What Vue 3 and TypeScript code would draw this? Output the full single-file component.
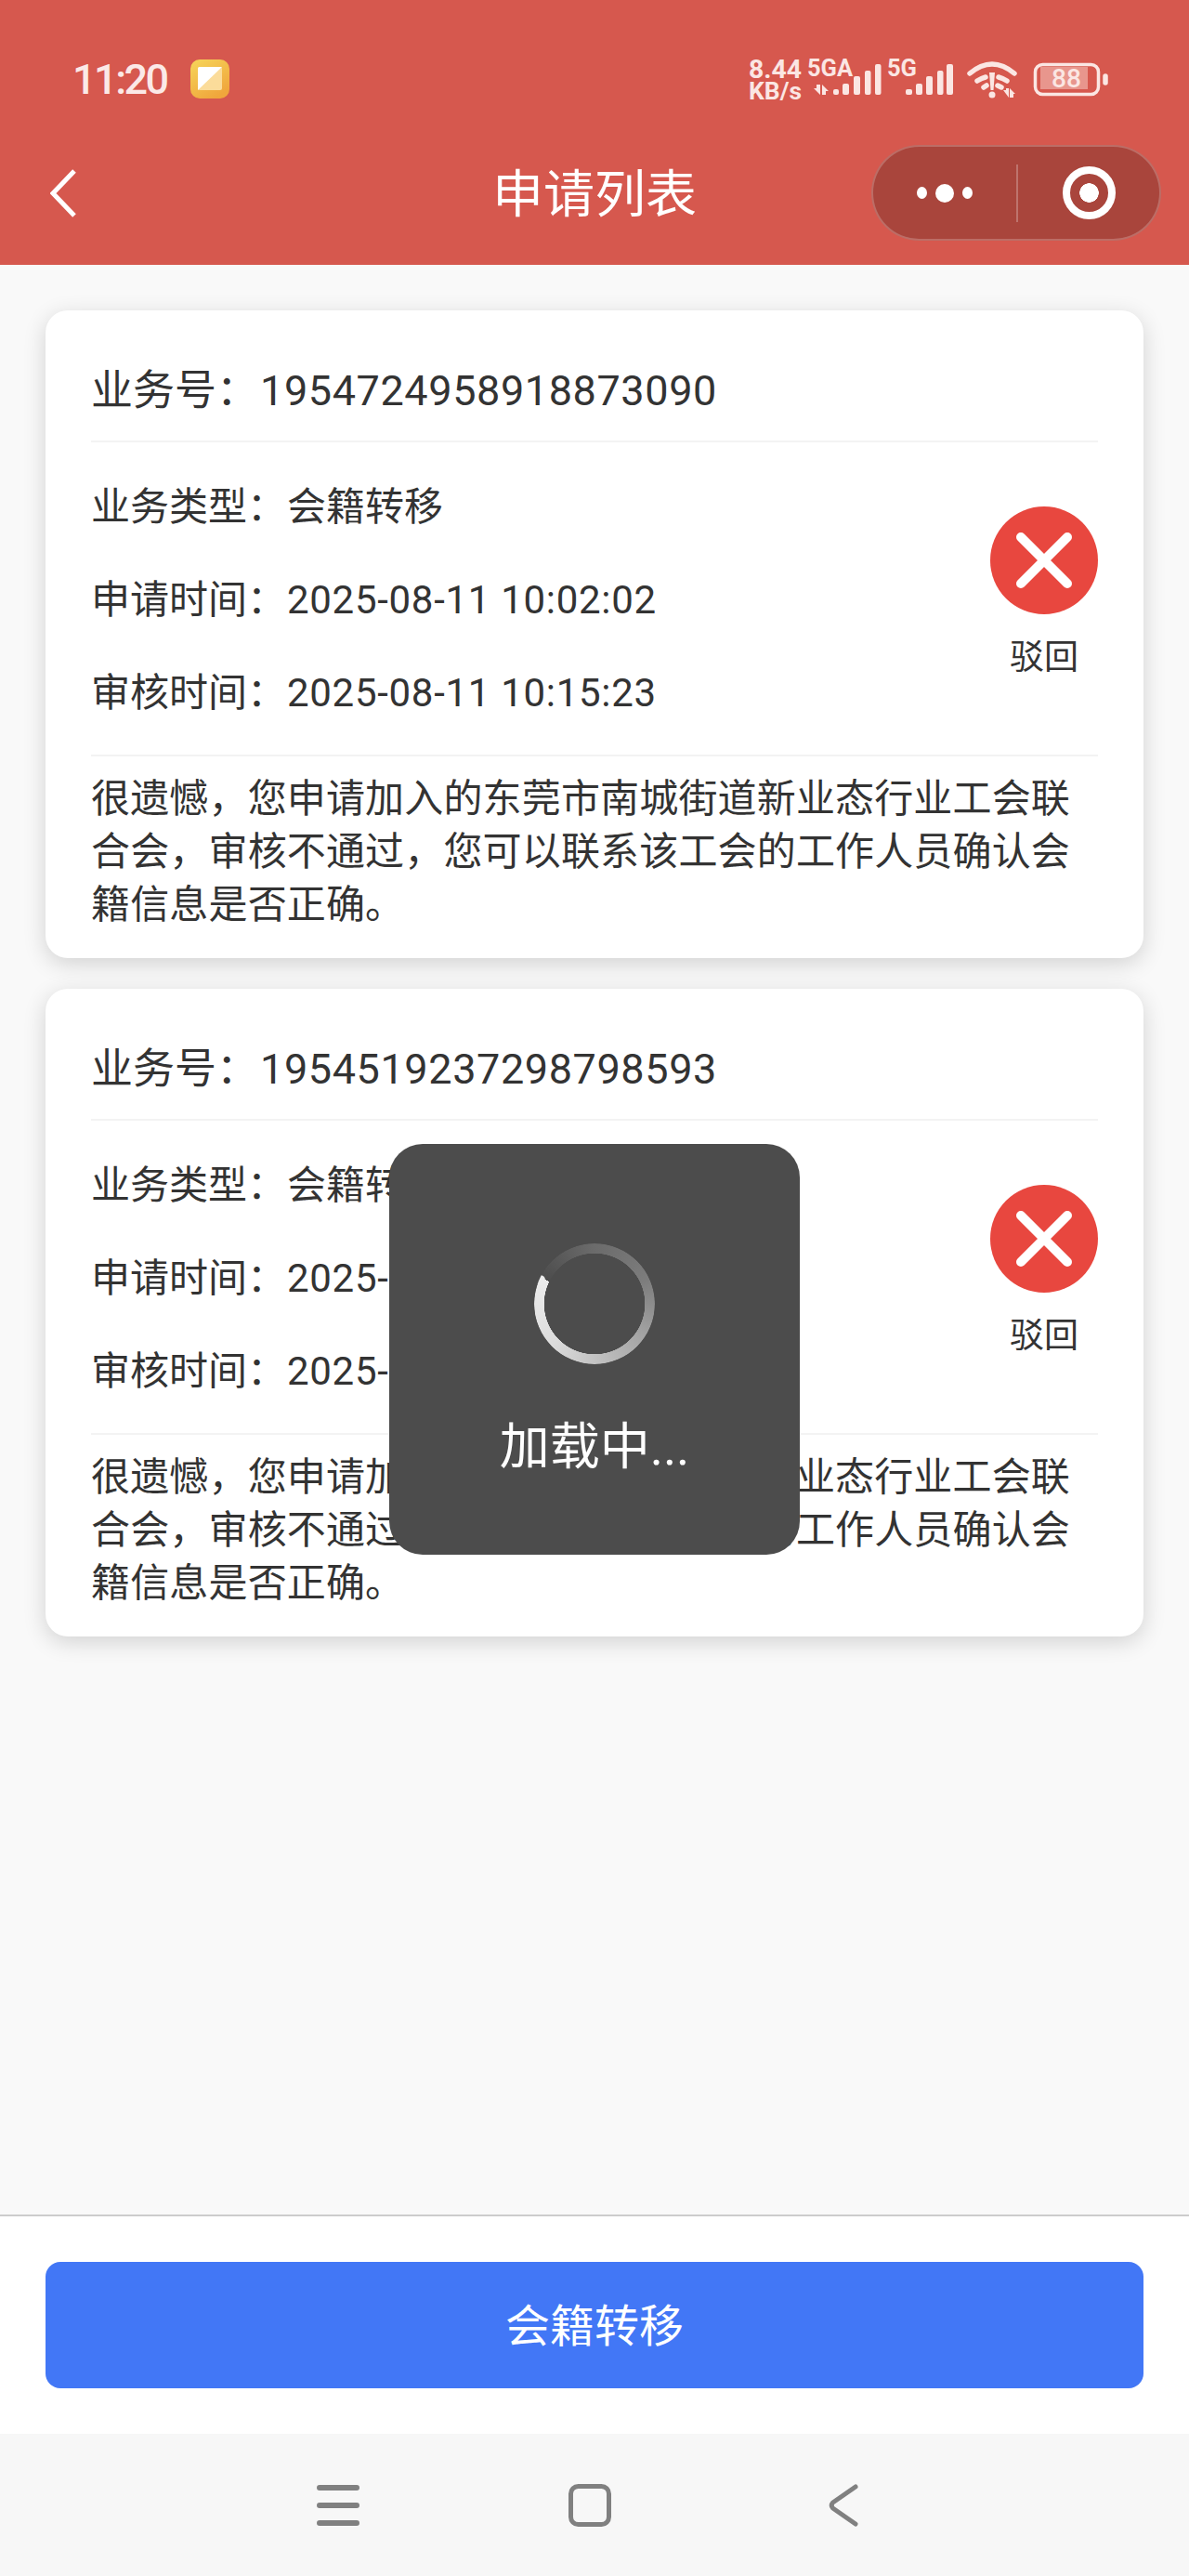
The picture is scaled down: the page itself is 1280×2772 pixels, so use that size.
<script setup lang="ts">
interface Application {
  no: string
  type: string
  applyTime: string
  reviewTime: string
  status: string
  message: string
}

const rejectMessage = '很遗憾，您申请加入的东莞市南城街道新业态行业工会联合会，审核不通过，您可以联系该工会的工作人员确认会籍信息是否正确。'

const list: Application[] = [
  {
    no: '1954724958918873090',
    type: '会籍转移',
    applyTime: '2025-08-11 10:02:02',
    reviewTime: '2025-08-11 10:15:23',
    status: '驳回',
    message: rejectMessage
  },
  {
    no: '1954519237298798593',
    type: '会籍转移',
    applyTime: '2025-08-10 20:26:34',
    reviewTime: '2025-08-10 20:40:11',
    status: '驳回',
    message: rejectMessage
  }
]
</script>

<template>
  <div class="page">
    <header class="top">
      <div class="status-bar">
        <span class="time">11:20</span>
        <svg class="app-badge" viewBox="0 0 42 42">
          <defs>
            <linearGradient id="badge" x1="0" y1="0" x2="0.6" y2="1">
              <stop offset="0" stop-color="#f6d65a" />
              <stop offset="1" stop-color="#f0a63c" />
            </linearGradient>
          </defs>
          <rect width="42" height="42" rx="10" fill="url(#badge)" />
          <rect x="8" y="8" width="26" height="25" rx="2" fill="#fbdc9a" />
          <path d="M8 33V10a2 2 0 0 1 2-2h24z" fill="#fff" />
        </svg>
        <svg class="status-icons" viewBox="800 55 400 60">
          <g fill="#fbe6e3" font-family="Roboto, sans-serif" font-weight="700">
            <text x="806" y="84" font-size="27" textLength="57" lengthAdjust="spacingAndGlyphs">8.44</text>
            <text x="806" y="107" font-size="25" textLength="57" lengthAdjust="spacingAndGlyphs">KB/s</text>
            <text x="869" y="82" font-size="25" textLength="49" lengthAdjust="spacingAndGlyphs">5GA</text>
            <text x="955" y="82" font-size="25" textLength="32" lengthAdjust="spacingAndGlyphs">5G</text>
            <path d="M876 95h3v-4h4v11zM885 102V91l7 7h-3v4z" />
            <rect x="897" y="96" width="6" height="6" rx="2" />
            <rect x="907" y="90" width="7" height="12" rx="2" />
            <rect x="919" y="82" width="7" height="20" rx="2" />
            <rect x="931" y="76" width="6.5" height="26" rx="2" />
            <rect x="942" y="69" width="6.5" height="33" rx="2" />
            <rect x="975" y="96" width="7" height="6" rx="2" />
            <rect x="986" y="90" width="7" height="12" rx="2" />
            <rect x="997" y="82" width="7" height="20" rx="2" />
            <rect x="1009" y="76" width="6.5" height="26" rx="2" />
            <rect x="1019" y="69" width="7" height="33" rx="2" />
            <circle cx="1068" cy="102" r="3.5" />
            <path d="M1065 78h6l-1.5 19h-3z" />
            <path d="M1080 97h3v-2h3v10zM1087 105V95l6 6h-2v4z" />
          </g>
          <g fill="none" stroke="#fbe6e3" stroke-linecap="round">
            <path d="M1044 79q24-20 48 0" stroke-width="5.5" />
            <path d="M1052 87q5-3 9-4M1075 83q4 1 9 4" stroke-width="5.5" />
            <path d="M1059 94l3-2M1074 92l4 2" stroke-width="5.5" />
            <rect x="1114.5" y="69.5" width="68" height="32" rx="8" stroke-width="3.5" />
            <path d="M1190 82v7" stroke-width="5.5" />
          </g>
          <rect x="1120" y="72" width="51" height="24" fill="#e8968d" />
          <text x="1132" y="94" fill="#fbe6e3" font-family="Roboto, sans-serif" font-weight="500" font-size="28" textLength="32" lengthAdjust="spacingAndGlyphs">88</text>
        </svg>
      </div>
      <div class="nav-bar">
        <svg class="back" viewBox="0 0 28 52">
          <path d="M26 2L3 26l23 24" />
        </svg>
        <h1 class="title">申请列表</h1>
        <div class="capsule">
          <div class="capsule-more">
            <i class="dot"></i><i class="dot big"></i><i class="dot"></i>
          </div>
          <i class="capsule-line"></i>
          <div class="capsule-close"><i></i></div>
        </div>
      </div>
    </header>

    <main class="list">
      <section v-for="item in list" :key="item.no" class="card">
        <div class="card-no">业务号：<span class="no-value">{{ item.no }}</span></div>
        <div class="card-body">
          <div class="rows">
            <div class="row">业务类型：<span class="value">{{ item.type }}</span></div>
            <div class="row">申请时间：<span class="value date">{{ item.applyTime }}</span></div>
            <div class="row">审核时间：<span class="value date">{{ item.reviewTime }}</span></div>
          </div>
          <div class="status">
            <svg class="status-mark" viewBox="0 0 116 116">
              <circle cx="58" cy="58" r="58" fill="#e8473f" />
              <path d="M33 33l50 50M83 33L33 83" stroke="#fff" stroke-width="10" stroke-linecap="round" />
            </svg>
            <span class="status-text">{{ item.status }}</span>
          </div>
        </div>
        <p class="card-msg">{{ item.message }}</p>
      </section>
    </main>

    <footer class="action">
      <button class="action-btn">会籍转移</button>
    </footer>

    <nav class="sys-nav">
      <svg class="sys-icon" viewBox="0 0 46 46">
        <path d="M3 4h40M3 23h40M3 42h40" stroke-width="6" />
      </svg>
      <svg class="sys-icon" viewBox="0 0 46 46">
        <rect x="2.5" y="2.5" width="41" height="41" rx="8" stroke-width="5" fill="none" />
      </svg>
      <svg class="sys-icon" viewBox="0 0 46 46">
        <path d="M38 3L13.5 20Q11 23 13.5 26L38 43" stroke-width="5" fill="none" />
      </svg>
    </nav>

    <div class="toast">
      <div class="spinner"><i class="spinner-cap"></i></div>
      <div class="toast-text">加载中...</div>
    </div>
  </div>
</template>

<style>
html,
body {
  margin: 0;
  background: #f9f9f9;
}
</style>

<style scoped>
.page {
  position: relative;
  display: flex;
  flex-direction: column;
  width: 1280px;
  height: 2772px;
  overflow: hidden;
  background: #f9f9f9;
  color: #333;
  font-family: Roboto, "Noto Sans CJK SC", sans-serif;
}

.top {
  background: #d6584e;
  color: #fff;
}

.status-bar {
  position: relative;
  display: flex;
  align-items: center;
  height: 114px;
  padding: 28px 0 0 78px;
}

.time {
  font-size: 45px;
  font-weight: 500;
  line-height: 1;
  letter-spacing: -2.5px;
  color: #fbe9e7;
}

.app-badge {
  width: 42px;
  height: 42px;
  margin-left: 25px;
}

.status-icons {
  width: 400px;
  height: 60px;
  margin-left: auto;
  margin-right: 80px;
}

.nav-bar {
  position: relative;
  display: flex;
  align-items: center;
  justify-content: center;
  height: 143px;
}

.back {
  position: absolute;
  left: 54px;
  top: 40px;
  width: 28px;
  height: 52px;
  fill: none;
  stroke: #fff;
  stroke-width: 5;
}

.title {
  margin: 0 0 8px;
  font-size: 55px;
  font-weight: 400;
  line-height: 1;
}

.capsule {
  position: absolute;
  right: 30px;
  top: 14px;
  box-sizing: border-box;
  display: flex;
  align-items: center;
  width: 312px;
  height: 103px;
  border: 2px solid rgba(255, 255, 255, 0.22);
  border-radius: 52px;
  background: #a9453c;
}

.capsule-more {
  display: flex;
  align-items: center;
  justify-content: center;
  gap: 9px;
  width: 154px;
}

.dot {
  width: 11px;
  height: 13px;
  border-radius: 50%;
  background: #fff;
}

.dot.big {
  width: 20px;
  height: 20px;
}

.capsule-line {
  width: 1.5px;
  height: 62px;
  background: rgba(255, 255, 255, 0.25);
}

.capsule-close {
  display: flex;
  flex: 1;
  align-items: center;
  justify-content: center;
  padding-left: 2px;
}

.capsule-close i {
  box-sizing: border-box;
  display: block;
  width: 57px;
  height: 57px;
  border: 8px solid #fff;
  border-radius: 50%;
  background: radial-gradient(circle, #fff 0 10px, transparent 10.5px);
}

.list {
  display: flex;
  flex: 1;
  flex-direction: column;
  gap: 33px;
  padding: 49px 49px 0;
}

.card {
  box-sizing: border-box;
  height: 697px;
  padding: 0 49px;
  border-radius: 24px;
  background: #fff;
  box-shadow: 0 6px 24px rgba(0, 0, 0, 0.16);
}

.card-no {
  height: 142px;
  border-bottom: 2px solid #f3f3f3;
  box-sizing: border-box;
  font-size: 45px;
  line-height: 173px;
  white-space: nowrap;
}

.no-value {
  margin-left: 2px;
  letter-spacing: 0.6px;
}

.card-body {
  display: flex;
  align-items: center;
  justify-content: space-between;
  padding: 18px 0;
  border-bottom: 2px solid #f3f3f3;
}

.row {
  height: 100px;
  font-size: 42px;
  line-height: 103px;
  white-space: nowrap;
}

.value {
  margin-left: 1px;
}

.date {
  letter-spacing: 0.7px;
}

.status {
  display: flex;
  flex-direction: column;
  align-items: center;
  width: 116px;
  padding-bottom: 12px;
}

.status-mark {
  width: 116px;
  height: 116px;
}

.status-text {
  margin-top: 23px;
  font-size: 37px;
  line-height: 48px;
}

.card-msg {
  margin: 0;
  padding-top: 17px;
  font-size: 42px;
  line-height: 57px;
  letter-spacing: 0.16px;
}

.action {
  display: flex;
  align-items: flex-start;
  height: 236px;
  box-sizing: border-box;
  padding: 49px 49px 0;
  border-top: 2px solid #ccc;
  background: #fff;
}

.action-btn {
  width: 100%;
  height: 136px;
  padding: 0 0 6px;
  border: 0;
  border-radius: 16px;
  background: #4277f6;
  color: #fff;
  font-family: inherit;
  font-size: 48px;
}

.sys-nav {
  display: flex;
  align-items: center;
  justify-content: center;
  gap: 225px;
  height: 153px;
  padding-right: 10px;
  background: #f7f7f7;
}

.sys-icon {
  width: 46px;
  height: 46px;
  fill: none;
  stroke: #808080;
  stroke-linecap: round;
}

.toast {
  position: absolute;
  left: 419px;
  top: 1231px;
  display: flex;
  flex-direction: column;
  align-items: center;
  width: 442px;
  height: 442px;
  border-radius: 36px;
  background: #4c4c4c;
}

.spinner {
  position: relative;
  width: 130px;
  height: 130px;
  margin-top: 107px;
  border-radius: 50%;
  background: conic-gradient(from 296deg, rgba(76, 76, 76, 1) 0deg, #6a6a6a 60deg, #7d7d7d 130deg, #a5a5a5 190deg, #dcdcdc 290deg, #ececec 360deg);
  -webkit-mask: radial-gradient(circle, transparent 54px, #000 54.5px);
  mask: radial-gradient(circle, transparent 54px, #000 54.5px);
}

.spinner-cap {
  position: absolute;
  left: 1px;
  top: 34px;
  width: 11px;
  height: 11px;
  border-radius: 50%;
  background: #ececec;
}

.toast-text {
  margin-top: 54px;
  font-size: 54px;
  line-height: 72px;
  color: #fff;
}
</style>
